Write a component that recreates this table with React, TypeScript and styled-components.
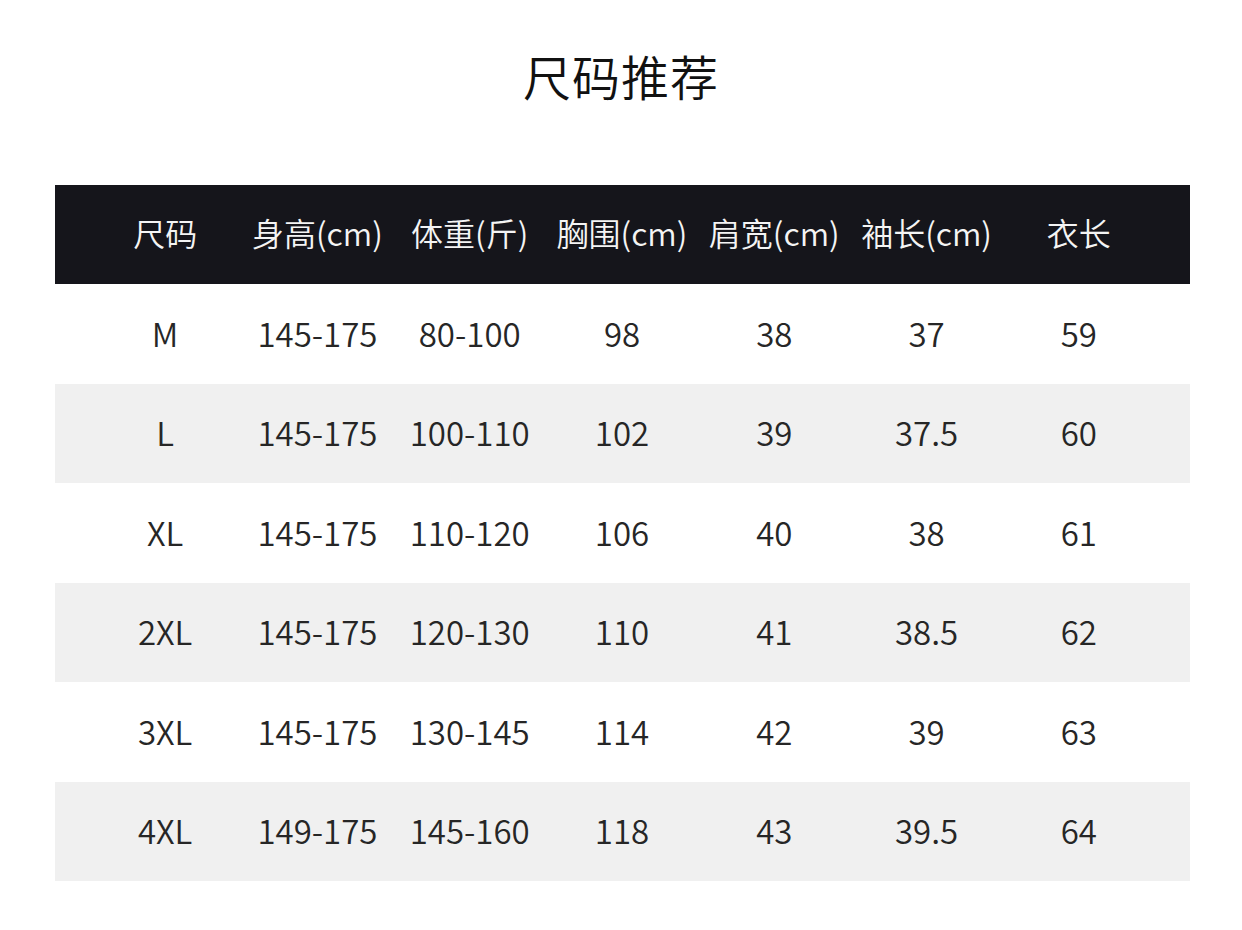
import React from 'react';
import styled, { createGlobalStyle } from 'styled-components';

const GlobalStyle = createGlobalStyle`
  body {
    margin: 0;
    background: #ffffff;
    font-family: "Noto Sans CJK SC", "Noto Sans", sans-serif;
  }
`;

const Page = styled.div`
  width: 1242px;
  height: 930px;
  background: #fff;
  display: flex;
  flex-direction: column;
`;

const Title = styled.h1`
  margin: 41px 0 0;
  height: 68px;
  line-height: 68px;
  font-size: 48px;
  font-weight: 350;
  color: #111;
  text-align: center;
  letter-spacing: 1px;
`;

const Table = styled.div`
  margin: 76px 0 0 55px;
  width: 1135px;
  display: flex;
  flex-direction: column;
`;

const Row = styled.div<{ $variant: 'head' | 'white' | 'gray' }>`
  display: grid;
  grid-template-columns: repeat(7, 1fr);
  padding: 0 35px 0 34px;
  height: ${({ $variant }) => ($variant === 'head' ? '99px' : '99.5px')};
  align-items: center;
  background: ${({ $variant }) =>
    $variant === 'head' ? '#15151b' : $variant === 'gray' ? '#f0f0f0' : '#ffffff'};
  color: ${({ $variant }) => ($variant === 'head' ? '#f4f4f4' : '#262626')};
`;

const Cell = styled.div<{ $head?: boolean }>`
  text-align: center;
  white-space: nowrap;
  font-size: ${({ $head }) => ($head ? '32px' : '33px')};
  font-weight: 350;
  line-height: 1;
  margin-top: ${({ $head }) => ($head ? '-6px' : '-1px')};
`;

const headers = ['尺码', '身高(cm)', '体重(斤)', '胸围(cm)', '肩宽(cm)', '袖长(cm)', '衣长'];

const rows: string[][] = [
  ['M', '145-175', '80-100', '98', '38', '37', '59'],
  ['L', '145-175', '100-110', '102', '39', '37.5', '60'],
  ['XL', '145-175', '110-120', '106', '40', '38', '61'],
  ['2XL', '145-175', '120-130', '110', '41', '38.5', '62'],
  ['3XL', '145-175', '130-145', '114', '42', '39', '63'],
  ['4XL', '149-175', '145-160', '118', '43', '39.5', '64'],
];

export default function App() {
  return (
    <Page>
      <GlobalStyle />
      <Title>尺码推荐</Title>
      <Table>
        <Row $variant="head">
          {headers.map((h) => (
            <Cell key={h} $head>
              {h}
            </Cell>
          ))}
        </Row>
        {rows.map((r, i) => (
          <Row key={r[0]} $variant={i % 2 === 1 ? 'gray' : 'white'}>
            {r.map((v, j) => (
              <Cell key={j}>{v}</Cell>
            ))}
          </Row>
        ))}
      </Table>
    </Page>
  );
}
